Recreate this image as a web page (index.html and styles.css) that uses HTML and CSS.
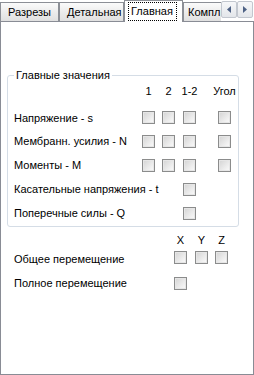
FILE: index.html
```html
<!DOCTYPE html>
<html>
<head>
<meta charset="utf-8">
<link rel="stylesheet" href="styles.css">
</head>
<body>
<div class="window">
  <div class="tabbar">
    <div class="tabs">
      <div class="tab t1">Разрезы</div>
      <div class="tab t2">Детальная</div>
      <div class="tab t3 active"><span class="focus">Главная</span></div>
      <div class="tab t4">Компл</div>
    </div>
    <div class="scroll">
      <div class="sbtn"><svg width="4" height="7" viewBox="0 0 4 7"><path d="M4 0 L0 3.5 L4 7 Z" fill="#4d6185"/></svg></div>
      <div class="sbtn"><svg width="4" height="7" viewBox="0 0 4 7"><path d="M0 0 L4 3.5 L0 7 Z" fill="#4d6185"/></svg></div>
    </div>
  </div>
  <div class="panel">
    <fieldset class="group">
      <legend>Главные значения</legend>
      <div class="grid">
        <div class="lbl"></div>
        <div class="hd">1</div>
        <div class="hd">2</div>
        <div class="hd">1-2</div>
        <div class="hd">Угол</div>

        <div class="lbl">Напряжение - s</div>
        <div class="cb"></div><div class="cb"></div><div class="cb"></div><div class="cb"></div>

        <div class="lbl">Мембранн. усилия - N</div>
        <div class="cb"></div><div class="cb"></div><div class="cb"></div><div class="cb"></div>

        <div class="lbl">Моменты - M</div>
        <div class="cb"></div><div class="cb"></div><div class="cb"></div><div class="cb"></div>

        <div class="lbl">Касательные напряжения - t</div>
        <div class="empty"></div><div class="empty"></div><div class="cb"></div><div class="empty"></div>

        <div class="lbl">Поперечные силы - Q</div>
        <div class="empty"></div><div class="empty"></div><div class="cb"></div><div class="empty"></div>
      </div>
    </fieldset>
    <div class="grid2">
      <div class="lbl"></div>
      <div class="hd">X</div>
      <div class="hd">Y</div>
      <div class="hd">Z</div>

      <div class="lbl">Общее перемещение</div>
      <div class="cb up"></div><div class="cb up"></div><div class="cb up"></div>

      <div class="lbl">Полное перемещение</div>
      <div class="cb"></div><div class="empty"></div><div class="empty"></div>
    </div>
  </div>
</div>
</body>
</html>
```

FILE: styles.css
```css
html, body {
  margin: 0;
  padding: 0;
  background: #ffffff;
}
body {
  font-family: "Liberation Sans", Arial, sans-serif;
  font-size: 11px;
  color: #000;
  width: 254px;
  height: 375px;
  overflow: hidden;
}
.window {
  width: 254px;
  height: 375px;
  display: flex;
  flex-direction: column;
}
.tabbar {
  height: 21px;
  display: flex;
  align-items: flex-start;
  position: relative;
  z-index: 2;
}
.tabs {
  width: 221px;
  height: 22px;
  overflow: hidden;
  display: flex;
  align-items: flex-end;
  flex: none;
}
.tab {
  box-sizing: border-box;
  height: 19px;
  margin-bottom: 1px;
  border: 1px solid #8c8f96;
  border-bottom: none;
  background: linear-gradient(#fbfbfb, #ebebeb 55%, #e0e0e0);
  display: flex;
  align-items: center;
  padding-left: 7px;
  line-height: 13px;
  white-space: nowrap;
  flex: none;
}
.t1 { width: 59px; }
.t2 { width: 65px; }
.t3 { width: 59px; }
.t4 { width: 70px; padding-left: 4px; }
.tab.active {
  height: 22px;
  margin-bottom: 0;
  background: #ffffff;
  padding-left: 3px;
}
.focus {
  border: 1px dotted #000;
  padding: 2px 3px 2px 2px;
  line-height: 13px;
}
.scroll {
  display: flex;
  margin-top: 1px;
}
.sbtn {
  box-sizing: border-box;
  width: 16px;
  height: 17px;
  border: 1px solid #c2c7cf;
  border-radius: 2px;
  background: linear-gradient(#f6f7f9, #e3e6ea);
  display: flex;
  align-items: center;
  justify-content: center;
}
.panel {
  box-sizing: border-box;
  flex: 1;
  border: 1px solid #898c95;
  background: #fff;
  display: flex;
  flex-direction: column;
  position: relative;
  z-index: 1;
}
.group {
  box-sizing: border-box;
  margin: 46px 0 0 6px;
  width: 232px;
  padding: 0 0 1px 6px;
  border: 1px solid #d5dde6;
  border-radius: 3px;
  min-width: 0;
}
.group legend {
  padding: 0 2px;
  line-height: 14px;
  color: #000;
}
.grid {
  display: grid;
  grid-template-columns: 128px 20px 21px 35px 13px;
  grid-template-rows: 18px 29px 24px 24px 24px 24px;
  align-items: center;
  justify-items: start;
}
.grid .hd, .grid2 .hd {
  width: 13px;
  display: flex;
  justify-content: center;
  white-space: nowrap;
  line-height: 13px;
}
.grid > .lbl { white-space: nowrap; }
.grid > .lbl:nth-child(6) { align-self: end; padding-bottom: 5px; }
.grid > .cb:nth-child(-n+10) { align-self: end; margin-bottom: 5px; }
.cb {
  box-sizing: border-box;
  width: 13px;
  height: 13px;
  border: 1px solid #8b8c8c;
  background: linear-gradient(135deg, #d3d3d3, #eeeeee 65%, #fbfbfb);
  box-shadow: inset 0 0 0 1px #e6e6e6;
}
.grid2 {
  display: grid;
  grid-template-columns: 160px 21px 20px 13px;
  grid-template-rows: 14px 24px 24px;
  margin: 6px 0 0 13px;
  align-items: center;
  justify-items: start;
  white-space: nowrap;
}
.cb.up { margin-top: -3px; }
```
